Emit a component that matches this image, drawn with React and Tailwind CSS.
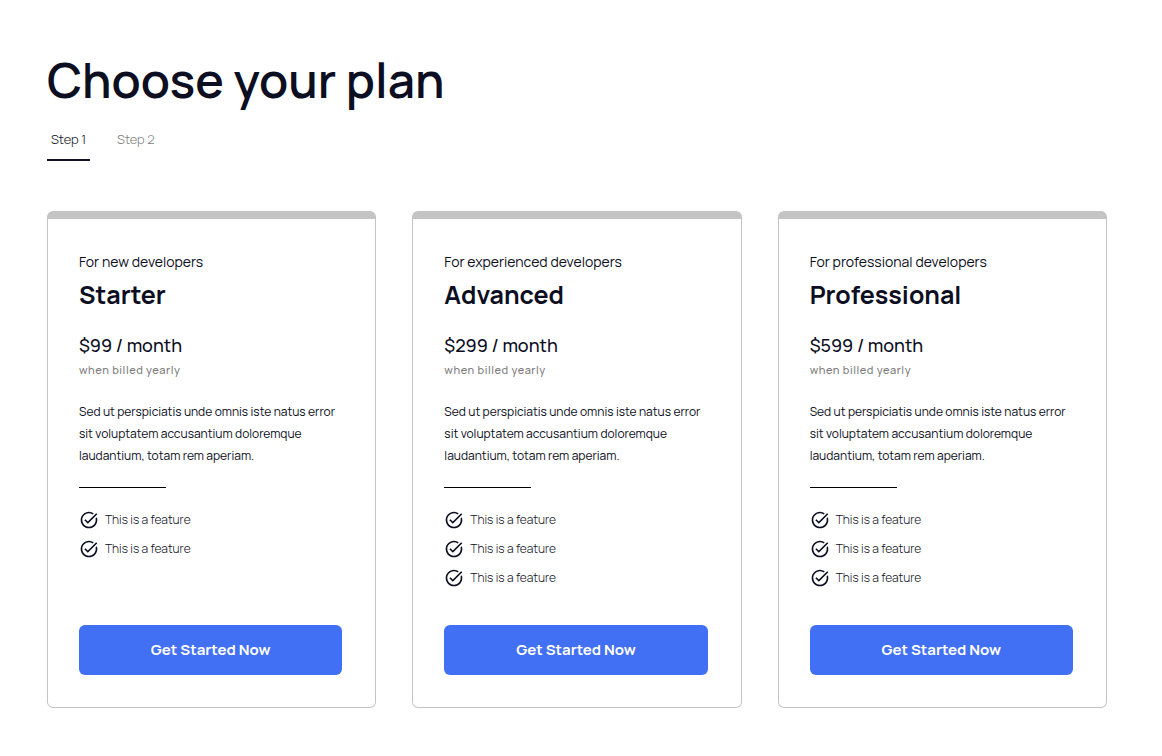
import React, { useState } from 'react';
import { MdTaskAlt } from 'react-icons/md';

const plans = [
  { id: 'starter', audience: 'For new developers', name: 'Starter', price: '$99 / month', features: 2 },
  { id: 'advanced', audience: 'For experienced developers', name: 'Advanced', price: '$299 / month', features: 3 },
  { id: 'professional', audience: 'For professional developers', name: 'Professional', price: '$599 / month', features: 3 },
];

const steps = ['Step 1', 'Step 2'];

const PlanCard = ({ plan }) => (
  <section className="flex min-w-0 flex-1 flex-col rounded-md border border-t-8 border-[#c4c4c4] pt-8 pr-[33px] pb-8 pl-[31px]">
    <p className="text-sm leading-[22px]">{plan.audience}</p>
    <h2 className="mt-1 text-[25px] leading-9 font-bold">{plan.name}</h2>
    <p className="mt-[18px] text-lg leading-7 font-medium">{plan.price}</p>
    <p className="mt-[3px] text-[11px] leading-4 font-medium tracking-wider text-[#7d7d7d]">when billed yearly</p>
    <p className="mt-[23px] text-xs leading-[22px]">
      Sed ut perspiciatis unde omnis iste natus error sit voluptatem accusantium doloremque laudantium, totam rem aperiam.
    </p>
    <hr className="mt-5 w-[87px] border-black" />
    <ul className="mt-[22px] mb-[37px] flex flex-col gap-[9px]">
      {Array.from({ length: plan.features }, (_, index) => (
        <li key={index} className="flex items-center gap-[6px] text-xs leading-5 font-light">
          <MdTaskAlt className="size-5 shrink-0" />
          This is a feature
        </li>
      ))}
    </ul>
    <button type="button" className="mt-auto h-[50px] rounded-md bg-[#4270f4] text-[15px] font-bold text-white hover:bg-[#345fdd]">
      Get Started Now
    </button>
  </section>
);

const App = () => {
  const [activeStep, setActiveStep] = useState('Step 1');

  return (
    <main className="pt-[50px] pr-[55px] pb-12 pl-[47px] font-['Manrope','Inter',sans-serif] text-[#0c0e22]">
      <h1 className="text-5xl leading-[60px] font-semibold">Choose your plan</h1>
      <nav className="mt-[18px] flex gap-[23px]">
        {steps.map((step) => (
          <button
            key={step}
            type="button"
            onClick={() => setActiveStep(step)}
            className={
              step === activeStep
                ? 'border-b-2 border-[#101228] px-1 pb-[9px] text-[13px] leading-[22px] font-light'
                : 'border-b-2 border-transparent px-1 pb-[9px] text-[13px] leading-[22px] font-light text-[#7d7d7d]'
            }
          >
            {step}
          </button>
        ))}
      </nav>
      <div className="mt-[50px] flex gap-9">
        {plans.map((plan) => (
          <PlanCard key={plan.id} plan={plan} />
        ))}
      </div>
    </main>
  );
};

export default App;
